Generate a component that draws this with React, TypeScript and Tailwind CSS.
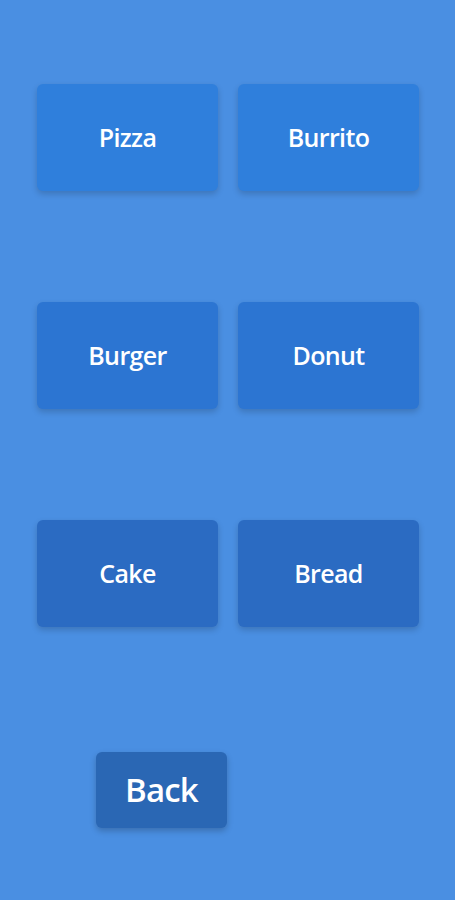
const ROWS = [
  { items: ['Pizza', 'Burrito'], bg: 'bg-[#2f7fdc]' },
  { items: ['Burger', 'Donut'], bg: 'bg-[#2c75d2]' },
  { items: ['Cake', 'Bread'], bg: 'bg-[#2b6bc2]' },
]

export default function App() {
  return (
    <div
      className="flex min-h-[900px] w-full flex-col bg-[#4a8fe2] pl-[37px] pr-[36px] pt-[84px]"
      style={{ fontFamily: '"Open Sans", "Liberation Sans", sans-serif' }}
    >
      <div className="flex flex-col gap-[111px]">
        {ROWS.map((row) => (
          <div key={row.items[0]} className="grid grid-cols-2 gap-[20px]">
            {row.items.map((label) => (
              <button
                key={label}
                className={`flex h-[107px] items-center justify-center rounded-md ${row.bg} text-[25px] font-semibold tracking-tight text-white shadow-[0_3px_6px_rgba(0,0,0,0.18)]`}
              >
                {label}
              </button>
            ))}
          </div>
        ))}
      </div>

      {/* Back */}
      <div className="mt-[125px] pl-[59px]">
        <button className="flex h-[76px] w-[131px] items-center justify-center rounded-md bg-[#2a67b4] text-[33px] font-semibold tracking-tight text-white shadow-[0_3px_6px_rgba(0,0,0,0.22)]">
          Back
        </button>
      </div>
    </div>
  )
}
